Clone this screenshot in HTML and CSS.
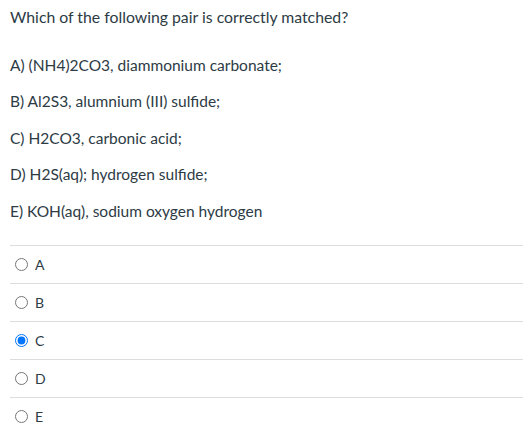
FILE: index.html
```html
<!DOCTYPE html>
<html lang="en">
<head>
<meta charset="utf-8">
<title>Quiz question</title>
<link rel="stylesheet" href="styles.css">
</head>
<body>
<div class="question">
  <p class="stem">Which of the following pair is correctly matched?</p>
  <div class="choices-text">
    <p>A) (NH4)2CO3, diammonium carbonate;</p>
    <p>B) Al2S3, alumnium (III) sulfide;</p>
    <p>C) H2CO3, carbonic acid;</p>
    <p>D) H2S(aq); hydrogen sulfide;</p>
    <p>E) KOH(aq), sodium oxygen hydrogen</p>
  </div>
  <div class="answers">
    <label class="answer"><input type="radio" name="q1" value="A"><span class="answer-label">A</span></label>
    <label class="answer"><input type="radio" name="q1" value="B"><span class="answer-label">B</span></label>
    <label class="answer"><input type="radio" name="q1" value="C" checked><span class="answer-label">C</span></label>
    <label class="answer"><input type="radio" name="q1" value="D"><span class="answer-label">D</span></label>
    <label class="answer"><input type="radio" name="q1" value="E"><span class="answer-label">E</span></label>
  </div>
</div>
</body>
</html>
```

FILE: styles.css
```css
html, body {
  margin: 0;
  padding: 0;
  background: #ffffff;
}
body {
  font-family: Lato, "Open Sans", "Liberation Sans", sans-serif;
  color: #2d3b45;
  font-size: 15.5px;
}
.question {
  padding: 0 8px 0 10px;
}
.stem {
  margin: 0;
  padding-top: 7px;
  font-size: 15.8px;
  line-height: 20px;
}
.choices-text {
  padding-top: 27.5px;
}
.choices-text p {
  margin: 0 0 15px 0;
  line-height: 21.5px;
}
.choices-text p:last-child {
  margin-bottom: 0;
}
.answers {
  margin-top: 23px;
}
.answer {
  display: flex;
  align-items: center;
  height: 37px;
  border-top: 1px solid #dddddd;
  font-size: 14px;
}
.answer input {
  margin: 0 3px 0 5px;
  width: 13px;
  height: 13px;
}
.answer-label {
  margin-left: 4px;
}
```
